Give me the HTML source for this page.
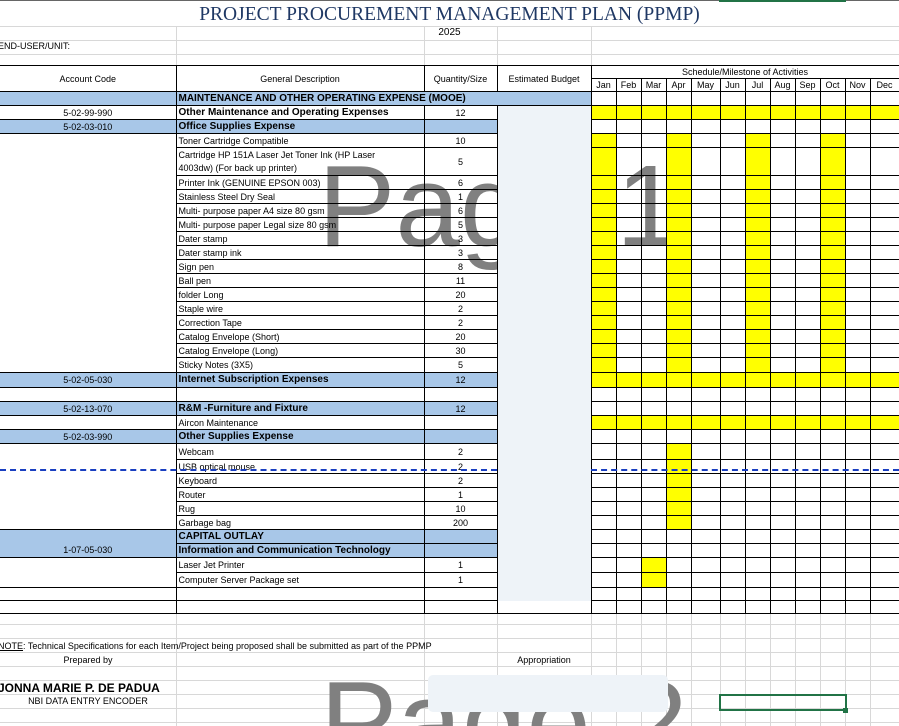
<!DOCTYPE html>
<html><head><meta charset="utf-8"><style>
*{margin:0;padding:0;box-sizing:border-box}
html{width:899px;height:726px;overflow:hidden}
body{width:899px;height:726px;overflow:hidden;background:#fff;position:relative;font-family:"Liberation Sans",sans-serif;font-size:9px;color:#000}
.grid{position:absolute;left:0;width:899px;
background:
linear-gradient(#d8d8d8,#d8d8d8) no-repeat 176px 0/1px 100%,
linear-gradient(#d8d8d8,#d8d8d8) no-repeat 424px 0/1px 100%,
linear-gradient(#d8d8d8,#d8d8d8) no-repeat 497px 0/1px 100%,
linear-gradient(#d8d8d8,#d8d8d8) no-repeat 591px 0/1px 100%,
linear-gradient(#d8d8d8,#d8d8d8) no-repeat 616px 0/1px 100%,
linear-gradient(#d8d8d8,#d8d8d8) no-repeat 641px 0/1px 100%,
linear-gradient(#d8d8d8,#d8d8d8) no-repeat 666px 0/1px 100%,
linear-gradient(#d8d8d8,#d8d8d8) no-repeat 691px 0/1px 100%,
linear-gradient(#d8d8d8,#d8d8d8) no-repeat 720px 0/1px 100%,
linear-gradient(#d8d8d8,#d8d8d8) no-repeat 745px 0/1px 100%,
linear-gradient(#d8d8d8,#d8d8d8) no-repeat 770px 0/1px 100%,
linear-gradient(#d8d8d8,#d8d8d8) no-repeat 795px 0/1px 100%,
linear-gradient(#d8d8d8,#d8d8d8) no-repeat 820px 0/1px 100%,
linear-gradient(#d8d8d8,#d8d8d8) no-repeat 845px 0/1px 100%,
linear-gradient(#d8d8d8,#d8d8d8) no-repeat 870px 0/1px 100%,
repeating-linear-gradient(to bottom,transparent 0 13px,#d8d8d8 13px 14px);}
#g1{top:0;height:65px;background-size:auto}
#g2{top:611px;height:115px}
table{position:absolute;left:0;top:65px;border-collapse:collapse;table-layout:fixed;width:899px}
td{padding:0 2px;overflow:hidden;white-space:nowrap;line-height:12px;vertical-align:middle;border:1px solid #000}
td.a{border-left:none;border-top:none;border-bottom:none;text-align:center}
td.c{text-align:center}
td.d{background:#eef3f8;border-top:none;border-bottom:none}
td.bl{background:#a8c7e8}
tr.blr td.a{border-bottom:1px solid #000;border-top:1px solid #000}
.bold{font-weight:bold;font-size:10px}
.y{background:#ffff00}
.h td{text-align:center}
td.wrap{white-space:normal;line-height:13px;padding-right:30px}
.wm{position:absolute;color:#808080;font-size:116px;line-height:1;font-family:"Liberation Sans",sans-serif}
</style></head><body>
<div class="grid" id="g1" style="background:
linear-gradient(#d8d8d8,#d8d8d8) no-repeat 0 26px/100% 1px,
linear-gradient(#d8d8d8,#d8d8d8) no-repeat 0 40px/100% 1px,
linear-gradient(#d8d8d8,#d8d8d8) no-repeat 0 54px/100% 1px,
linear-gradient(#d8d8d8,#d8d8d8) no-repeat 176px 26px/1px 100%,
linear-gradient(#d8d8d8,#d8d8d8) no-repeat 424px 26px/1px 100%,
linear-gradient(#d8d8d8,#d8d8d8) no-repeat 497px 26px/1px 100%,
linear-gradient(#d8d8d8,#d8d8d8) no-repeat 591px 26px/1px 100%,
linear-gradient(#666,#666) no-repeat 0 0/100% 1px;"></div>
<div class="grid" id="g2"></div>
<div style="position:absolute;left:719px;top:0;width:127px;height:2px;background:#217346"></div>
<div style="position:absolute;top:4px;left:0;width:899px;text-align:center;font-family:'Liberation Serif',serif;font-size:19.5px;color:#1f3864">PROJECT PROCUREMENT MANAGEMENT PLAN (PPMP)</div>
<div style="position:absolute;top:27px;left:0;width:899px;text-align:center;font-size:10px">2025</div>
<div style="position:absolute;top:41px;left:-2px;font-size:9px">END-USER/UNIT:</div>

<div class="wm" style="left:318px;top:148px">Pag</div>
<div class="wm" style="left:616px;top:148px">1</div>

<table>
<colgroup><col style="width:176px"><col style="width:248px"><col style="width:73px"><col style="width:94px">
<col style="width:25px"><col style="width:25px"><col style="width:25px"><col style="width:25px"><col style="width:29px"><col style="width:25px"><col style="width:25px"><col style="width:25px"><col style="width:25px"><col style="width:25px"><col style="width:25px"><col style="width:29px"></colgroup>
<tr class="h" style="height:12px"><td rowspan="2" style="border-left:none;background:#fff">Account Code</td><td rowspan="2" style="background:#fff">General Description</td><td rowspan="2" style="background:#fff">Quantity/Size</td><td rowspan="2" style="background:#fff">Estimated Budget</td><td colspan="12" style="background:#fff">Schedule/Milestone of Activities</td></tr>
<tr class="h" style="height:12px"><td>Jan</td><td>Feb</td><td>Mar</td><td>Apr</td><td>May</td><td>Jun</td><td>Jul</td><td>Aug</td><td>Sep</td><td>Oct</td><td>Nov</td><td>Dec</td></tr>
<tr class="blr" style="height:14px"><td class="a bl"></td><td class="bl bold" colspan="3" style="border-right:none">MAINTENANCE AND OTHER OPERATING EXPENSE (MOOE)</td><td></td><td></td><td></td><td></td><td></td><td></td><td></td><td></td><td></td><td></td><td></td><td></td></tr>
<tr style="height:14px"><td class="a">5-02-99-990</td><td class="bold">Other Maintenance and Operating Expenses</td><td class="c">12</td><td class="d"></td><td class="y"></td><td class="y"></td><td class="y"></td><td class="y"></td><td class="y"></td><td class="y"></td><td class="y"></td><td class="y"></td><td class="y"></td><td class="y"></td><td class="y"></td><td class="y"></td></tr>
<tr class="blr" style="height:14px"><td class="a bl">5-02-03-010</td><td class="bl bold">Office Supplies Expense</td><td class="bl"></td><td class="d"></td><td></td><td></td><td></td><td></td><td></td><td></td><td></td><td></td><td></td><td></td><td></td><td></td></tr>
<tr style="height:14px"><td class="a"></td><td>Toner Cartridge Compatible</td><td class="c">10</td><td class="d"></td><td class="y"></td><td></td><td></td><td class="y"></td><td></td><td></td><td class="y"></td><td></td><td></td><td class="y"></td><td></td><td></td></tr>
<tr style="height:28px"><td class="a"></td><td class="wrap">Cartridge HP 151A Laser Jet Toner Ink (HP Laser 4003dw) (For back up printer)</td><td class="c">5</td><td class="d"></td><td class="y"></td><td></td><td></td><td class="y"></td><td></td><td></td><td class="y"></td><td></td><td></td><td class="y"></td><td></td><td></td></tr>
<tr style="height:14px"><td class="a"></td><td>Printer Ink (GENUINE EPSON 003)</td><td class="c">6</td><td class="d"></td><td class="y"></td><td></td><td></td><td class="y"></td><td></td><td></td><td class="y"></td><td></td><td></td><td class="y"></td><td></td><td></td></tr>
<tr style="height:14px"><td class="a"></td><td>Stainless Steel Dry Seal</td><td class="c">1</td><td class="d"></td><td class="y"></td><td></td><td></td><td class="y"></td><td></td><td></td><td class="y"></td><td></td><td></td><td class="y"></td><td></td><td></td></tr>
<tr style="height:14px"><td class="a"></td><td>Multi- purpose paper A4 size 80 gsm</td><td class="c">6</td><td class="d"></td><td class="y"></td><td></td><td></td><td class="y"></td><td></td><td></td><td class="y"></td><td></td><td></td><td class="y"></td><td></td><td></td></tr>
<tr style="height:14px"><td class="a"></td><td>Multi- purpose paper Legal size 80 gsm</td><td class="c">5</td><td class="d"></td><td class="y"></td><td></td><td></td><td class="y"></td><td></td><td></td><td class="y"></td><td></td><td></td><td class="y"></td><td></td><td></td></tr>
<tr style="height:14px"><td class="a"></td><td>Dater stamp</td><td class="c">3</td><td class="d"></td><td class="y"></td><td></td><td></td><td class="y"></td><td></td><td></td><td class="y"></td><td></td><td></td><td class="y"></td><td></td><td></td></tr>
<tr style="height:14px"><td class="a"></td><td>Dater stamp ink</td><td class="c">3</td><td class="d"></td><td class="y"></td><td></td><td></td><td class="y"></td><td></td><td></td><td class="y"></td><td></td><td></td><td class="y"></td><td></td><td></td></tr>
<tr style="height:14px"><td class="a"></td><td>Sign pen</td><td class="c">8</td><td class="d"></td><td class="y"></td><td></td><td></td><td class="y"></td><td></td><td></td><td class="y"></td><td></td><td></td><td class="y"></td><td></td><td></td></tr>
<tr style="height:14px"><td class="a"></td><td>Ball pen</td><td class="c">11</td><td class="d"></td><td class="y"></td><td></td><td></td><td class="y"></td><td></td><td></td><td class="y"></td><td></td><td></td><td class="y"></td><td></td><td></td></tr>
<tr style="height:14px"><td class="a"></td><td>folder Long</td><td class="c">20</td><td class="d"></td><td class="y"></td><td></td><td></td><td class="y"></td><td></td><td></td><td class="y"></td><td></td><td></td><td class="y"></td><td></td><td></td></tr>
<tr style="height:14px"><td class="a"></td><td>Staple wire</td><td class="c">2</td><td class="d"></td><td class="y"></td><td></td><td></td><td class="y"></td><td></td><td></td><td class="y"></td><td></td><td></td><td class="y"></td><td></td><td></td></tr>
<tr style="height:14px"><td class="a"></td><td>Correction Tape</td><td class="c">2</td><td class="d"></td><td class="y"></td><td></td><td></td><td class="y"></td><td></td><td></td><td class="y"></td><td></td><td></td><td class="y"></td><td></td><td></td></tr>
<tr style="height:14px"><td class="a"></td><td>Catalog Envelope (Short)</td><td class="c">20</td><td class="d"></td><td class="y"></td><td></td><td></td><td class="y"></td><td></td><td></td><td class="y"></td><td></td><td></td><td class="y"></td><td></td><td></td></tr>
<tr style="height:14px"><td class="a"></td><td>Catalog Envelope (Long)</td><td class="c">30</td><td class="d"></td><td class="y"></td><td></td><td></td><td class="y"></td><td></td><td></td><td class="y"></td><td></td><td></td><td class="y"></td><td></td><td></td></tr>
<tr style="height:15px"><td class="a"></td><td>Sticky Notes (3X5)</td><td class="c">5</td><td class="d"></td><td class="y"></td><td></td><td></td><td class="y"></td><td></td><td></td><td class="y"></td><td></td><td></td><td class="y"></td><td></td><td></td></tr>
<tr class="blr" style="height:15px"><td class="a bl">5-02-05-030</td><td class="bl bold">Internet Subscription Expenses</td><td class="bl c">12</td><td class="d"></td><td class="y"></td><td class="y"></td><td class="y"></td><td class="y"></td><td class="y"></td><td class="y"></td><td class="y"></td><td class="y"></td><td class="y"></td><td class="y"></td><td class="y"></td><td class="y"></td></tr>
<tr style="height:14px"><td class="a"></td><td></td><td></td><td class="d"></td><td></td><td></td><td></td><td></td><td></td><td></td><td></td><td></td><td></td><td></td><td></td><td></td></tr>
<tr class="blr" style="height:14px"><td class="a bl">5-02-13-070</td><td class="bl bold">R&amp;M -Furniture and Fixture</td><td class="bl c">12</td><td class="d"></td><td></td><td></td><td></td><td></td><td></td><td></td><td></td><td></td><td></td><td></td><td></td><td></td></tr>
<tr style="height:14px"><td class="a"></td><td>Aircon Maintenance</td><td></td><td class="d"></td><td class="y"></td><td class="y"></td><td class="y"></td><td class="y"></td><td class="y"></td><td class="y"></td><td class="y"></td><td class="y"></td><td class="y"></td><td class="y"></td><td class="y"></td><td class="y"></td></tr>
<tr class="blr" style="height:14px"><td class="a bl">5-02-03-990</td><td class="bl bold">Other Supplies Expense</td><td class="bl"></td><td class="d"></td><td></td><td></td><td></td><td></td><td></td><td></td><td></td><td></td><td></td><td></td><td></td><td></td></tr>
<tr style="height:16px"><td class="a"></td><td>Webcam</td><td class="c">2</td><td class="d"></td><td></td><td></td><td></td><td class="y"></td><td></td><td></td><td></td><td></td><td></td><td></td><td></td><td></td></tr>
<tr style="height:14px"><td class="a"></td><td>USB optical mouse</td><td class="c">2</td><td class="d"></td><td></td><td></td><td></td><td class="y"></td><td></td><td></td><td></td><td></td><td></td><td></td><td></td><td></td></tr>
<tr style="height:14px"><td class="a"></td><td>Keyboard</td><td class="c">2</td><td class="d"></td><td></td><td></td><td></td><td class="y"></td><td></td><td></td><td></td><td></td><td></td><td></td><td></td><td></td></tr>
<tr style="height:14px"><td class="a"></td><td>Router</td><td class="c">1</td><td class="d"></td><td></td><td></td><td></td><td class="y"></td><td></td><td></td><td></td><td></td><td></td><td></td><td></td><td></td></tr>
<tr style="height:14px"><td class="a"></td><td>Rug</td><td class="c">10</td><td class="d"></td><td></td><td></td><td></td><td class="y"></td><td></td><td></td><td></td><td></td><td></td><td></td><td></td><td></td></tr>
<tr style="height:14px"><td class="a"></td><td>Garbage bag</td><td class="c">200</td><td class="d"></td><td></td><td></td><td></td><td class="y"></td><td></td><td></td><td></td><td></td><td></td><td></td><td></td><td></td></tr>
<tr class="blr" style="height:14px"><td class="a bl" style="border-bottom:none"></td><td class="bl bold">CAPITAL OUTLAY</td><td class="bl"></td><td class="d"></td><td></td><td></td><td></td><td></td><td></td><td></td><td></td><td></td><td></td><td></td><td></td><td></td></tr>
<tr class="blr" style="height:14px"><td class="a bl" style="border-top:none">1-07-05-030</td><td class="bl bold">Information and Communication Technology</td><td class="bl"></td><td class="d"></td><td></td><td></td><td></td><td></td><td></td><td></td><td></td><td></td><td></td><td></td><td></td><td></td></tr>
<tr style="height:15px"><td class="a"></td><td>Laser Jet Printer</td><td class="c">1</td><td class="d"></td><td></td><td></td><td class="y"></td><td></td><td></td><td></td><td></td><td></td><td></td><td></td><td></td><td></td></tr>
<tr style="height:15px"><td class="a"></td><td>Computer Server Package set</td><td class="c">1</td><td class="d"></td><td></td><td></td><td class="y"></td><td></td><td></td><td></td><td></td><td></td><td></td><td></td><td></td><td></td></tr>
<tr style="height:13px"><td class="a" style="border-top:1px solid #000;border-bottom:1px solid #000"></td><td></td><td></td><td class="d"></td><td></td><td></td><td></td><td></td><td></td><td></td><td></td><td></td><td></td><td></td><td></td><td></td></tr>
<tr style="height:13px"><td class="a" style="border-bottom:1px solid #000"></td><td></td><td></td><td style="border-top:none"></td><td></td><td></td><td></td><td></td><td></td><td></td><td></td><td></td><td></td><td></td><td></td><td></td></tr>
</table>

<div style="position:absolute;left:0;top:469px;width:497px;border-top:2px dashed #1a3fc0"></div>
<div style="position:absolute;left:591px;top:469px;width:308px;border-top:2px dashed #1a3fc0"></div>

<div style="position:absolute;left:-2px;top:641px;font-size:9px"><u>NOTE</u>: Technical Specifications for each Item/Project being proposed shall be submitted as part of the PPMP</div>
<div style="position:absolute;left:0;width:176px;top:655px;text-align:center;font-size:9px">Prepared by</div>
<div style="position:absolute;left:497px;width:94px;top:655px;text-align:center;font-size:9px">Appropriation</div>
<div style="position:absolute;left:-2px;top:681px;font-size:12px;font-weight:bold">JONNA MARIE P. DE PADUA</div>
<div style="position:absolute;left:0;width:176px;top:696px;text-align:center;font-size:9px">NBI DATA ENTRY ENCODER</div>
<div style="position:absolute;left:300px;top:670px;width:400px;height:56px;overflow:hidden">
<div class="wm" style="left:20px;top:-6px;white-space:nowrap">Page 2</div>
<div style="position:absolute;left:128px;top:5px;width:240px;height:37px;background:#eef3f8;border-radius:5px"></div>
</div>
<div style="position:absolute;left:719px;top:694px;width:128px;height:17px;border:2px solid #217346"></div>
<div style="position:absolute;left:843px;top:708px;width:5px;height:5px;background:#217346"></div>
</body></html>
